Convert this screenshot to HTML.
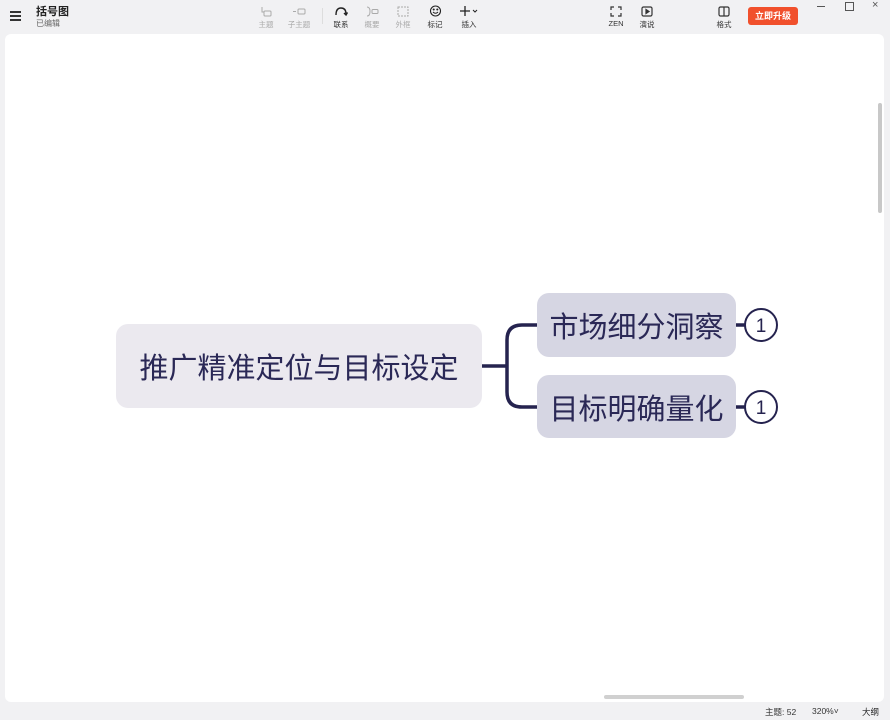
<!DOCTYPE html><html><head><meta charset="utf-8"><style>
body{margin:0;width:890px;height:720px;background:#f1f1f3;font-family:"Liberation Sans","Noto Sans CJK SC",sans-serif;position:relative;overflow:hidden}
.a{position:absolute}
.canvas{left:5px;top:34px;width:879px;height:668px;background:#fff;border-radius:6px}
.tb{font-size:7.5px;color:#333;text-align:center}
.tb svg{display:block;margin:0 auto 2px}
.dim{color:#aaa}
.node{display:flex;align-items:center;justify-content:center;color:#2a2856;border-radius:12px}
</style></head><body>
<div class="a canvas"></div>
<div class="a" style="left:10px;top:11px;width:11px;height:1.5px;background:#333;box-shadow:0 4px #333,0 8px #333"></div>
<div class="a" style="left:36px;top:3px;font-size:11px;font-weight:bold;color:#222">括号图</div>
<div class="a" style="left:36px;top:18px;font-size:8px;color:#666">已编辑</div>
<div class="a tb dim" style="left:256px;top:6px;width:20px"><svg width="12" height="11" fill="none" stroke="#aaa"><rect x="4" y="5" width="7" height="5" rx="1"/><path d="M2 1v5h2"/></svg>主题</div>
<div class="a tb dim" style="left:286px;top:6px;width:26px"><svg width="14" height="11" fill="none" stroke="#aaa"><rect x="6" y="3" width="7" height="5" rx="1"/><path d="M1 5.5h3"/></svg>子主题</div>
<div class="a" style="left:322px;top:8px;width:1px;height:16px;background:#ddd"></div>
<div class="a tb" style="left:331px;top:5px;width:20px"><svg width="14" height="12" fill="none" stroke="#222" stroke-width="1.4"><path d="M2 10Q2 3 7 3T12 9"/><path d="M10 8l2 2 1.5-2.5"/></svg>联系</div>
<div class="a tb dim" style="left:362px;top:6px;width:20px"><svg width="14" height="11" fill="none" stroke="#aaa"><path d="M2 1q3 0 3 4.5T2 10"/><rect x="7" y="3.5" width="6" height="4" rx="1"/></svg>概要</div>
<div class="a tb dim" style="left:393px;top:6px;width:20px"><svg width="12" height="11" fill="none" stroke="#aaa" stroke-dasharray="2 1"><rect x="1" y="1" width="10" height="9"/></svg>外框</div>
<div class="a tb" style="left:425px;top:5px;width:20px"><svg width="13" height="12" fill="none" stroke="#222" stroke-width="1.1"><circle cx="6.5" cy="6" r="5"/><path d="M4 7q2.5 2.5 5 0"/><circle cx="4.7" cy="4.5" r=".5"/><circle cx="8.3" cy="4.5" r=".5"/></svg>标记</div>
<div class="a tb" style="left:456px;top:5px;width:26px"><svg width="22" height="12" fill="none" stroke="#222" stroke-width="1.3"><path d="M7 1v10M2 6h10"/><path d="M15 5l2 2 2-2" stroke-width="1"/></svg>插入</div>
<div class="a tb" style="left:606px;top:6px;width:20px"><svg width="12" height="11" fill="none" stroke="#333" stroke-width="1.2"><path d="M1 4V1h3M8 1h3v3M11 7v3H8M4 10H1V7"/></svg>ZEN</div>
<div class="a tb" style="left:637px;top:6px;width:20px"><svg width="12" height="11" fill="none" stroke="#333" stroke-width="1.2"><rect x="1" y="1" width="10" height="9" rx="1.5"/><path d="M5 3.5v4l3-2z" fill="#333"/></svg>演说</div>
<div class="a tb" style="left:714px;top:6px;width:20px"><svg width="12" height="11" fill="none" stroke="#333" stroke-width="1.2"><rect x="1" y="1" width="10" height="9" rx="1.5"/><path d="M6 1v9"/></svg>格式</div>
<div class="a" style="left:748px;top:7px;width:50px;height:18px;background:#f1502c;border-radius:3px;color:#fff;font-size:9px;font-weight:bold;text-align:center;line-height:18px">立即升级</div>
<div class="a" style="left:817px;top:6px;width:8px;height:1px;background:#555"></div>
<div class="a" style="left:845px;top:2px;width:7px;height:7px;border:1px solid #555"></div>
<div class="a" style="left:872px;top:-1px;font-size:11px;color:#555">×</div>
<div class="a" style="left:878px;top:103px;width:4px;height:110px;background:#c8c8c8;border-radius:2px"></div>
<div class="a" style="left:604px;top:695px;width:140px;height:4px;background:#d0d0d0;border-radius:2px"></div>
<div class="a" style="left:765px;top:706px;font-size:8.5px;color:#333">主题: 52</div>
<div class="a" style="left:812px;top:706px;font-size:8.5px;color:#333">320%˅</div>
<div class="a" style="left:862px;top:706px;font-size:8.5px;color:#222">大纲</div>
<div class="a node" style="left:116px;top:324px;width:366px;height:84px;background:#ebe9ef;font-size:29px">推广精准定位与目标设定</div>
<div class="a node" style="left:537px;top:293px;width:199px;height:64px;background:#d6d6e3;font-size:29px">市场细分洞察</div>
<div class="a node" style="left:537px;top:375px;width:199px;height:63px;background:#d6d6e3;font-size:29px">目标明确量化</div>
<svg class="a" style="left:0;top:0" width="890" height="720">
<g fill="none" stroke="#25234f" stroke-width="3.5">
<path d="M482 366H507"/><path d="M537 325H522Q507 325 507 340V392Q507 407 522 407H537"/>
<path d="M736 325H745M736 407H745"/>
<circle cx="761" cy="325" r="16" stroke-width="2" fill="#fff"/><circle cx="761" cy="407" r="16" stroke-width="2" fill="#fff"/>
</g>
<text x="761" y="332" font-size="19" text-anchor="middle" fill="#25234f" font-family="Liberation Sans">1</text>
<text x="761" y="414" font-size="19" text-anchor="middle" fill="#25234f" font-family="Liberation Sans">1</text>
</svg>
</body></html>
